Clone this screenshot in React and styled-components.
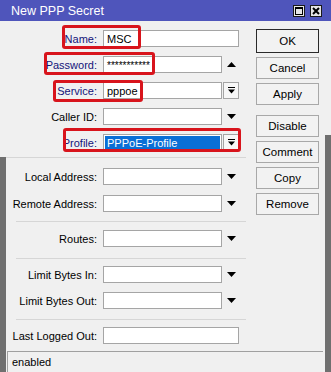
import React from 'react'
import styled, { createGlobalStyle } from 'styled-components'

const GlobalStyle = createGlobalStyle`
  html, body {
    margin: 0;
    padding: 0;
  }
  body {
    width: 331px;
    height: 372px;
    overflow: hidden;
    background: #f0f0f0;
    font-family: "Liberation Sans", Arial, sans-serif;
    font-size: 11px;
    color: #000;
  }
`

const Window = styled.div`
  position: relative;
  width: 331px;
  height: 372px;
  display: flex;
  flex-direction: column;
  overflow: hidden;
  background: #f0f0f0;
`

const TitleBar = styled.div`
  height: 21px;
  flex: none;
  display: flex;
  align-items: center;
  padding: 0 9px 0 11px;
  background: #4f55bb;
  color: #fff;
  font-size: 12.5px;
`

const Title = styled.span`
  flex: 1;
`

const TitleButtons = styled.div`
  display: flex;
  gap: 5px;
`

const TitleButton = styled.div`
  width: 12px;
  height: 12px;
  box-sizing: border-box;
  display: flex;
  align-items: center;
  justify-content: center;
  background: #e6e6e6;
  border: 1px solid #1a1a1a;
`

const Body = styled.div`
  flex: 1;
  display: flex;
  min-height: 0;
`

const Edge = styled.div`
  width: 6px;
  flex: none;
  background: linear-gradient(
    to bottom,
    #f0f0f0 0,
    #f0f0f0 ${p => p.$split}px,
    #6f6f6f ${p => p.$split}px
  );
`

const Main = styled.div`
  flex: 1;
  display: flex;
  flex-direction: column;
  min-width: 0;
`

const Columns = styled.div`
  flex: 1;
  display: flex;
`

const Form = styled.div`
  width: 240px;
  padding-top: 9px;
  display: flex;
  flex-direction: column;
`

const Section = styled.div`
  display: flex;
  flex-direction: column;
  gap: ${p => p.$gap}px;
`

const Separator = styled.div`
  height: 1px;
  background: #d6d6d6;
  margin: ${p => p.$top}px 0 ${p => p.$bottom}px ${p => p.$left}px;
`

const Row = styled.div`
  height: 17px;
  display: flex;
  align-items: center;
`

const Label = styled.span`
  width: 91px;
  margin-right: 6px;
  text-align: right;
  white-space: nowrap;
  color: ${p => (p.$marked ? '#14147a' : '#000')};
`

const Field = styled.div`
  width: ${p => p.$width}px;
  height: 17px;
  box-sizing: border-box;
  display: flex;
  align-items: center;
  padding: 0 ${p => (p.$selected ? 1 : 3)}px;
  background: #fff;
  border: 1px solid #a5a5a5;
  white-space: nowrap;
  overflow: hidden;
`

const Selection = styled.span`
  flex: 1;
  height: 13px;
  display: flex;
  align-items: center;
  padding-left: 2px;
  background: #0a6fd6;
  color: #fff;
`

const Secret = styled.span`
  font-size: 10px;
  padding-top: 2px;
`

const ArrowSlot = styled.div`
  width: 18px;
  display: flex;
  justify-content: center;
`

const DropButton = styled.div`
  width: 16px;
  height: 17px;
  margin-left: 1px;
  box-sizing: border-box;
  display: flex;
  align-items: center;
  justify-content: center;
  background: #f7f7f7;
  border: 1px solid #a5a5a5;
`

const ButtonColumn = styled.div`
  width: 63px;
  margin: 0 6px 0 10px;
  padding-top: 8px;
  display: flex;
  flex-direction: column;
`

const ButtonGroup = styled.div`
  display: flex;
  flex-direction: column;
  gap: 4px;
  margin-bottom: 10px;
`

const Button = styled.div`
  height: ${p => (p.$default ? 24 : 22)}px;
  box-sizing: border-box;
  display: flex;
  align-items: center;
  justify-content: center;
  background: #f2f2f2;
  border: 1px solid ${p => (p.$default ? '#2a2a2a' : '#a8a8a8')};
  font-size: 11.5px;
`

const StatusBar = styled.div`
  height: 21px;
  flex: none;
  box-sizing: border-box;
  display: flex;
  align-items: center;
  margin: 0 2px 0 1px;
  padding-left: 4px;
  border-top: 1px solid #a0a0a0;
  border-left: 1px solid #a0a0a0;
  background: #f0f0f0;
`

const Mark = styled.div`
  position: absolute;
  left: ${p => p.$x}px;
  top: ${p => p.$y}px;
  width: ${p => p.$w}px;
  height: ${p => p.$h}px;
  box-sizing: border-box;
  border: 3px solid #d8141c;
  border-radius: 3px;
  pointer-events: none;
`

const DownArrow = () => (
  <svg width="9" height="5" viewBox="0 0 9 5">
    <polygon points="0,0 9,0 4.5,5" fill="#000" />
  </svg>
)

const UpArrow = () => (
  <svg width="9" height="5" viewBox="0 0 9 5">
    <polygon points="0,5 9,5 4.5,0" fill="#000" />
  </svg>
)

const DropIcon = () => (
  <svg width="7" height="7" viewBox="0 0 7 7">
    <rect x="0" y="0" width="7" height="1" fill="#000" />
    <polygon points="0,2.5 7,2.5 3.5,6.5" fill="#000" />
  </svg>
)

const MaxIcon = () => (
  <svg width="8" height="8" viewBox="0 0 8 8">
    <rect x="0.5" y="0.5" width="7" height="7" fill="none" stroke="#000" />
    <rect x="0" y="0" width="8" height="2" fill="#000" />
  </svg>
)

const CloseIcon = () => (
  <svg width="8" height="8" viewBox="0 0 8 8">
    <path d="M1 1 L7 7 M7 1 L1 7" stroke="#000" strokeWidth="2" />
  </svg>
)

const Input = ({ label, marked, width = 119, children, after }) => (
  <Row>
    <Label $marked={marked}>{label}</Label>
    <Field $width={width}>{children}</Field>
    {after}
  </Row>
)

const down = <ArrowSlot><DownArrow /></ArrowSlot>

const App = () => {
  return (
    <Window>
      <GlobalStyle />
      <TitleBar>
        <Title>New PPP Secret</Title>
        <TitleButtons>
          <TitleButton><MaxIcon /></TitleButton>
          <TitleButton><CloseIcon /></TitleButton>
        </TitleButtons>
      </TitleBar>
      <Body>
        <Edge $split={136} />
        <Main>
          <Columns>
            <Form>
              <Section $gap={9}>
                <Input label="Name:" marked width={136}>MSC</Input>
                <Input label="Password:" marked after={<ArrowSlot><UpArrow /></ArrowSlot>}>
                  <Secret>***********</Secret>
                </Input>
                <Input label="Service:" marked after={<DropButton><DropIcon /></DropButton>}>
                  pppoe
                </Input>
                <Input label="Caller ID:" after={down} />
                <Row>
                  <Label $marked>Profile:</Label>
                  <Field $width={119} $selected>
                    <Selection>PPPoE-Profile</Selection>
                  </Field>
                  <DropButton><DropIcon /></DropButton>
                </Row>
              </Section>
              <Separator $top={6} $bottom={10} $left={0} />
              <Section $gap={10}>
                <Input label="Local Address:" after={down} />
                <Input label="Remote Address:" after={down} />
              </Section>
              <Separator $top={9} $bottom={8} $left={10} />
              <Input label="Routes:" after={down} />
              <Separator $top={11} $bottom={7} $left={10} />
              <Section $gap={9}>
                <Input label="Limit Bytes In:" after={down} />
                <Input label="Limit Bytes Out:" after={down} />
              </Section>
              <Separator $top={10} $bottom={7} $left={10} />
              <Input label="Last Logged Out:" width={136} />
            </Form>
            <ButtonColumn>
              <ButtonGroup>
                <Button $default>OK</Button>
                <Button>Cancel</Button>
                <Button>Apply</Button>
              </ButtonGroup>
              <ButtonGroup>
                <Button>Disable</Button>
                <Button>Comment</Button>
                <Button>Copy</Button>
                <Button>Remove</Button>
              </ButtonGroup>
            </ButtonColumn>
          </Columns>
          <StatusBar>enabled</StatusBar>
        </Main>
        <Edge $split={114} />
      </Body>
      <Mark $x={62} $y={25} $w={79} $h={24} />
      <Mark $x={44} $y={52} $w={111} $h={23} />
      <Mark $x={53} $y={80} $w={90} $h={22} />
      <Mark $x={63} $y={128} $w={178} $h={24} />
    </Window>
  )
}

export default App
